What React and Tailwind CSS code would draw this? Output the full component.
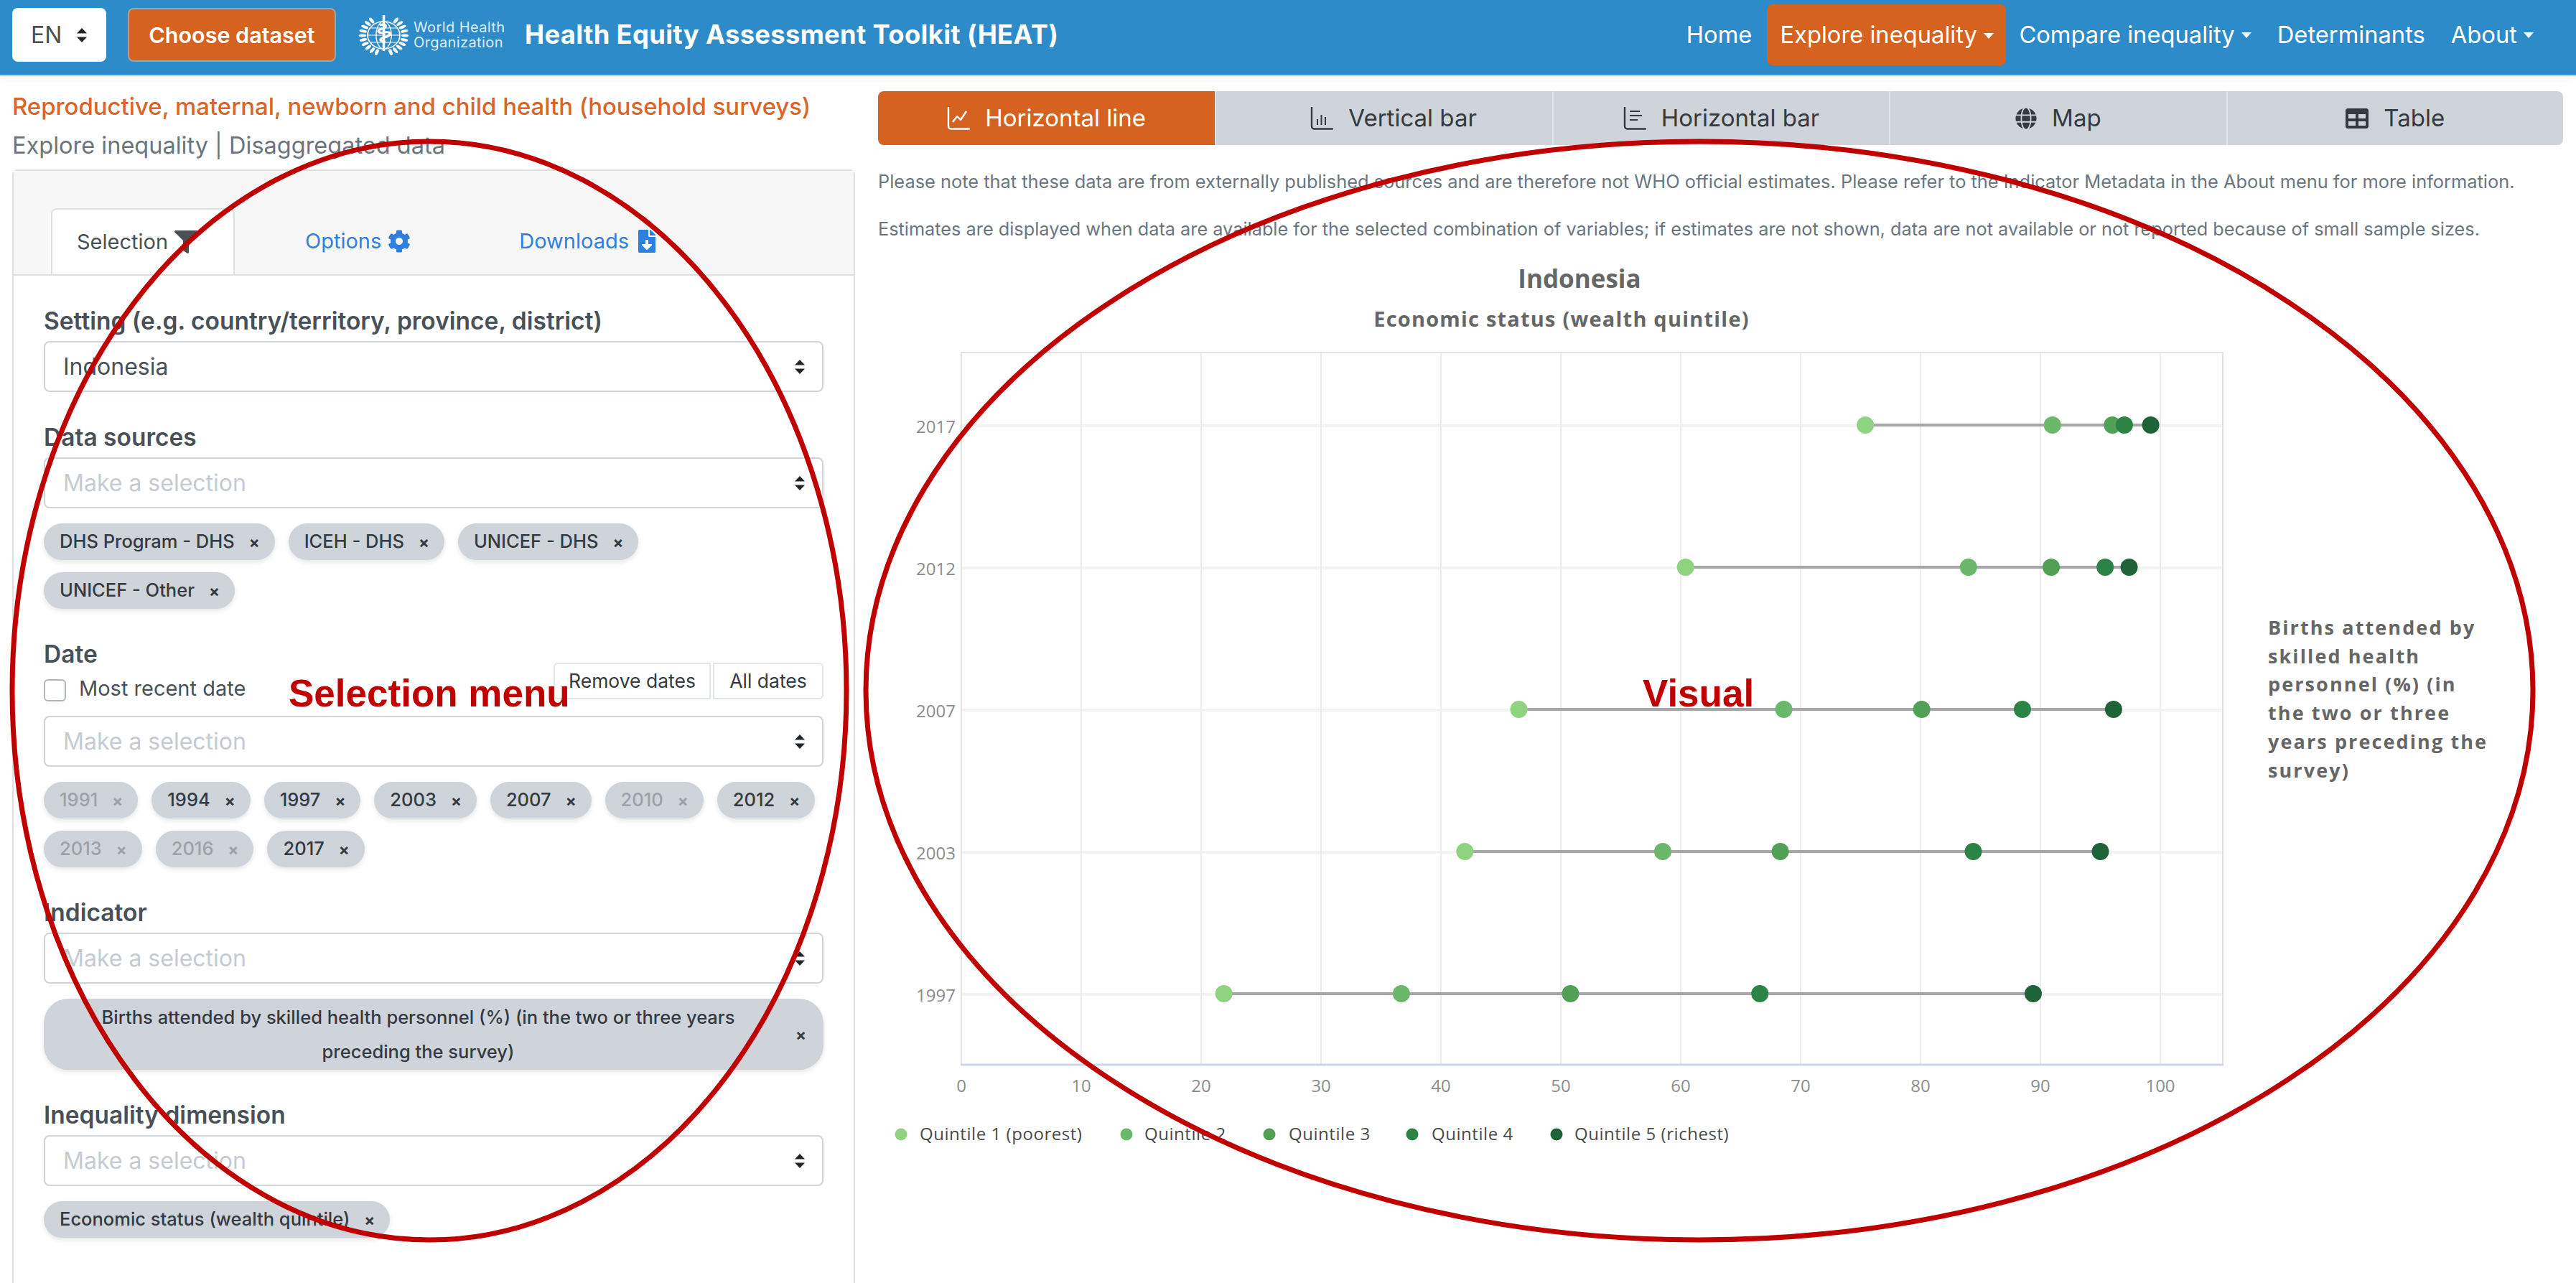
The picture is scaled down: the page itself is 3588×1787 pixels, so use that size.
import { FaCog, FaFileDownload, FaFilter, FaGlobe, FaTable } from "react-icons/fa";

const dots = ["#8fd27f", "#6bb86a", "#52a055", "#2b8346", "#1f6338"];

const rows = [
  { year: "2017", y: 592, values: [75.4, 91, 96, 97, 99.2] },
  { year: "2012", y: 790, values: [60.4, 84, 90.9, 95.4, 97.4] },
  { year: "2007", y: 988, values: [46.5, 68.6, 80.1, 88.5, 96.1] },
  { year: "2003", y: 1186, values: [42, 58.5, 68.3, 84.4, 95] },
  { year: "1997", y: 1384, values: [21.9, 36.7, 50.8, 66.6, 89.4] },
];

const ticks = [0, 10, 20, 30, 40, 50, 60, 70, 80, 90, 100];
const legend = [
  { label: "Quintile 1 (poorest)", dot: 1255, text: 1281 },
  { label: "Quintile 2", dot: 1569, text: 1594 },
  { label: "Quintile 3", dot: 1768, text: 1795 },
  { label: "Quintile 4", dot: 1967, text: 1994 },
  { label: "Quintile 5 (richest)", dot: 2168, text: 2193 },
];

const axisTitle = ["Births attended by", "skilled health", "personnel (%) (in", "the two or three", "years preceding the", "survey)"];

const xOf = (value) => 1339 + value * 16.7;

function Sort() {
  return (
    <svg width="16" height="20" viewBox="0 0 16 20" className="shrink-0 fill-[#212529]">
      <path d="M8 0l7 7.5H1z" />
      <path d="M8 20l-7-7.5h14z" />
    </svg>
  );
}

function Caret() {
  return <span className="ml-[9px] mt-[2px] inline-block border-x-[7px] border-t-[8px] border-x-transparent border-t-white" />;
}

// axis shaped icons of the chart type tabs
function AxisIcon({ children }) {
  return (
    <svg width="32" height="32" viewBox="0 0 32 32" fill="none" stroke="currentColor" strokeWidth="2.4" className="shrink-0">
      <path d="M2 1V27a3.5 3.5 0 0 0 3.5 3.5H31" strokeLinecap="round" />
      {children}
    </svg>
  );
}

function Select({ text, className = "" }) {
  return (
    <div className={`flex h-[71px] items-center justify-between rounded-lg border-2 border-[#ced4da] bg-white pl-[25px] pr-[23px] text-[32px] ${className}`}>
      <span className={text ? "text-[#495057]" : "text-[#c5cbd1]"}>{text || "Make a selection"}</span>
      <Sort />
    </div>
  );
}

function Chip({ label, off }) {
  return (
    <span className={`flex h-[51px] items-center gap-[20px] rounded-full bg-[#ced4da] pl-[22px] pr-[21px] text-[25.5px] font-medium shadow-[0_3px_6px_rgba(0,0,0,0.1)] ${off ? "text-[#9ca2a8]" : "text-[#343a40]"}`}>
      {label}
      <span className="text-[22px] font-bold leading-none">×</span>
    </span>
  );
}

function Chips({ children }) {
  return <div className="mt-[21px] flex flex-wrap gap-x-[19px] gap-y-[17px]">{children}</div>;
}

function Label({ children, className = "" }) {
  return <div className={`mb-[8px] h-[40px] text-[33.5px] font-semibold leading-[40px] text-[#495057] ${className}`}>{children}</div>;
}

function WhoLogo() {
  const leaves = [];
  for (let a = 35; a <= 165; a += 14) {
    leaves.push(a, -a);
  }
  return (
    <svg width="71" height="58" viewBox="-35.5 -29 71 58" className="shrink-0" fill="none" stroke="#fff">
      <g transform="scale(1.18 1)">
        <circle r="19" strokeWidth="1.5" />
        <ellipse rx="9" ry="19" strokeWidth="1.2" />
        <path d="M-19 0h38M-16-10h32M-16 10h32" strokeWidth="1.2" />
        <path d="M0-28V22" strokeWidth="3" />
        <path d="M-5-14c8-3 10 3 3 5s-5 7 3 5 8 5 0 7-5 6 1 6" strokeWidth="3" />
        {leaves.map((a) => (
          <ellipse key={a} cx="0" cy="-25" rx="2" ry="4.5" fill="#fff" stroke="none" transform={`rotate(${a})`} />
        ))}
      </g>
    </svg>
  );
}

function Header() {
  return (
    <header className="flex h-[105px] shrink-0 items-center border-b-2 border-[#3c97d3] bg-[#2e8bc9] pb-[6px] pl-[17px] pr-[40px] shadow-[0_4px_10px_rgba(0,0,0,0.05)]">
      <div className="flex h-[75px] w-[131px] items-center justify-between rounded-lg bg-white pl-[26px] pr-[26px] text-[32px] text-[#495057]">
        EN
        <Sort />
      </div>
      <button className="ml-[30px] h-[75px] w-[290px] rounded-lg border-2 border-[#a9a29a] bg-[#d6621f] text-[30.5px] font-semibold text-white">
        Choose dataset
      </button>
      <div className="ml-[31px]">
        <WhoLogo />
      </div>
      <div className="ml-[6px] w-[125px] whitespace-nowrap text-[20px] leading-[21px] tracking-[0.4px] text-[#dcedf8]">
        <div>World Health</div>
        <div>Organization</div>
      </div>
      <div className="ml-[30px] text-[36.3px] font-bold tracking-[0.35px] text-white">Health Equity Assessment Toolkit (HEAT)</div>
      <nav className="ml-auto flex h-[85px] items-center text-[32.7px] text-white">
        <a className="px-[18px]">Home</a>
        <a className="ml-[3px] flex h-full w-[333px] items-center rounded-lg bg-[#d6621f] pl-[18px]">
          Explore inequality
          <Caret />
        </a>
        <a className="flex items-center px-[18px]">
          Compare inequality
          <Caret />
        </a>
        <a className="px-[18px]">Determinants</a>
        <a className="flex items-center pl-[18px] pr-[19px]">
          About
          <Caret />
        </a>
      </nav>
    </header>
  );
}

function Sidebar() {
  return (
    <aside className="flex w-[1208px] shrink-0 flex-col pl-[17px] pr-[17px]">
      <div className="mt-[23px] h-[40px] text-[32.9px] font-medium leading-[40px] text-[#d9652b]">
        Reproductive, maternal, newborn and child health (household surveys)
      </div>
      <div className="mt-[15px] h-[40px] text-[32.5px] leading-[40px] text-[#6c757d]">Explore inequality | Disaggregated data</div>
      <div className="mt-[13px] flex-1 rounded-t-lg border-2 border-b-0 border-[#dfdfdf]">
        <div className="flex h-[146px] items-end border-b-2 border-[#dfdfdf] bg-[#f7f7f7] pl-[52px] text-[29px]">
          <div className="flex h-[92px] w-[256px] items-center gap-[9px] rounded-t-lg border-2 border-b-0 border-[#dee2e6] bg-white pl-[34px] text-[#495057]">
            Selection
            <FaFilter className="text-[32px] text-[#495057]" />
          </div>
          <div className="ml-[98px] flex h-[92px] items-center gap-[9px] text-[#2f7fe0]">
            Options
            <FaCog className="text-[32px]" />
          </div>
          <div className="ml-[151px] flex h-[92px] items-center gap-[9px] text-[#2f7fe0]">
            Downloads
            <FaFileDownload className="text-[32px]" />
          </div>
        </div>
        <div className="px-[42px] pt-[43px]">
          <Label>Setting (e.g. country/territory, province, district)</Label>
          <Select text="Indonesia" />

          <Label className="mt-[43px]">Data sources</Label>
          <Select />
          <Chips>
            <Chip label="DHS Program - DHS" />
            <Chip label="ICEH - DHS" />
            <Chip label="UNICEF - DHS" />
            <Chip label="UNICEF - Other" />
          </Chips>

          <Label className="mt-[43px] !mb-0">Date</Label>
          <div className="-mt-[8px] flex h-[54px] justify-between">
            <label className="flex items-end gap-[18px] text-[29px] leading-[36px] text-[#495057]">
              <input type="checkbox" readOnly className="h-[31px] w-[31px] appearance-none rounded-md border-2 border-[#adb5bd] bg-white" />
              Most recent date
            </label>
            <div className="flex h-[51px] gap-[3px] text-[26.5px] text-[#343a40]">
              <button className="w-[219px] rounded-l-md border-2 border-[#e3e6e9]">Remove dates</button>
              <button className="w-[154px] rounded-r-md border-2 border-[#e3e6e9]">All dates</button>
            </div>
          </div>
          <Select className="mt-[20px]" />
          <Chips>
            <Chip label="1991" off />
            <Chip label="1994" />
            <Chip label="1997" />
            <Chip label="2003" />
            <Chip label="2007" />
            <Chip label="2010" off />
            <Chip label="2012" />
            <Chip label="2013" off />
            <Chip label="2016" off />
            <Chip label="2017" />
          </Chips>

          <Label className="mt-[43px]">Indicator</Label>
          <Select />
          <div className="mt-[21px] flex h-[99px] items-center rounded-[34px] bg-[#ced4da] pl-[22px] pr-[24px] text-[25.5px] font-medium leading-[48px] text-[#343a40] shadow-[0_3px_6px_rgba(0,0,0,0.1)]">
            <span className="flex-1 text-center">Births attended by skilled health personnel (%) (in the two or three years preceding the survey)</span>
            <span className="ml-[26px] text-[22px] font-bold leading-none">×</span>
          </div>

          <Label className="mt-[43px]">Inequality dimension</Label>
          <Select />
          <Chips>
            <Chip label="Economic status (wealth quintile)" />
          </Chips>
        </div>
      </div>
    </aside>
  );
}

function Tabs() {
  const items = [
    {
      label: "Horizontal line",
      active: true,
      icon: (
        <AxisIcon>
          <path d="M8 21l6-8 5 5 8-12" strokeLinejoin="round" />
        </AxisIcon>
      ),
    },
    {
      label: "Vertical bar",
      pad: "pl-[26px]",
      icon: (
        <AxisIcon>
          <path d="M10 25V17M15.5 25V11M21 25V14" strokeWidth="2" />
        </AxisIcon>
      ),
    },
    {
      label: "Horizontal bar",
      icon: (
        <AxisIcon>
          <path d="M9 6H23M9 12H26M9 18H20" strokeWidth="2.2" />
        </AxisIcon>
      ),
    },
    { label: "Map", icon: <FaGlobe size={30} /> },
    { label: "Table", icon: <FaTable size={32} /> },
  ];
  return (
    <div className="mt-[22px] grid h-[75px] grid-cols-5 overflow-hidden rounded-lg">
      {items.map((item) => (
        <div
          key={item.label}
          className={`flex items-center justify-center gap-[21px] border-l-2 text-[33px] first:border-l-0 ${item.pad || ""} ${
            item.active ? "border-[#d6621f] bg-[#d6621f] text-white" : "border-[#dfe3e7] bg-[#ced4da] text-[#343a40]"
          }`}
        >
          {item.icon}
          {item.label}
        </div>
      ))}
    </div>
  );
}

function Chart() {
  return (
    <svg width="1910" height="1130" viewBox="1223 470 1910 1130" className="shrink-0" fontFamily="'Open Sans', sans-serif">
      {rows.map((row) => (
        <line key={row.year} x1="1339" x2="3096" y1={row.y + 1} y2={row.y + 1} stroke="#f3f3f3" strokeWidth="4" />
      ))}
      {ticks.map((tick) => (
        <line key={tick} x1={xOf(tick)} x2={xOf(tick)} y1="491" y2="1483" stroke="#ececec" strokeWidth="2" />
      ))}
      <path d="M1339 1483V491H3096V1483" fill="none" stroke="#e2e2e2" strokeWidth="2" />
      <line x1="1338" x2="3097" y1="1483" y2="1483" stroke="#ccd6eb" strokeWidth="3" />

      {rows.map((row) => (
        <g key={row.year}>
          <text x="1331" y={row.y + 11} textAnchor="end" fontSize="24" fill="#8c8c8c">
            {row.year}
          </text>
          <line x1={xOf(row.values[0])} x2={xOf(row.values[4])} y1={row.y} y2={row.y} stroke="#a6a6a6" strokeWidth="4" />
          {row.values.map((value, i) => (
            <circle key={i} cx={xOf(value)} cy={row.y} r="12" fill={dots[i]} />
          ))}
        </g>
      ))}

      {ticks.map((tick) => (
        <text key={tick} x={xOf(tick)} y="1521" textAnchor="middle" fontSize="24" fill="#8c8c8c">
          {tick}
        </text>
      ))}

      {legend.map((item, i) => (
        <g key={item.label}>
          <circle cx={item.dot} cy="1580" r="8.5" fill={dots[i]} />
          <text x={item.text} y="1588" fontSize="24" letterSpacing="0.55" fill="#4a4a4a">
            {item.label}
          </text>
        </g>
      ))}
    </svg>
  );
}

function Visual() {
  return (
    <main className="flex flex-1 flex-col pl-[15px] pr-[18px]">
      <Tabs />
      <p className="mt-[31px] h-[40px] text-[25.4px] leading-[40px] text-[#6c757d]">
        Please note that these data are from externally published sources and are therefore not WHO official estimates. Please refer to the Indicator Metadata in the About menu for more information.
      </p>
      <p className="mt-[26px] h-[40px] text-[25.3px] leading-[40px] text-[#6c757d]">
        Estimates are displayed when data are available for the selected combination of variables; if estimates are not shown, data are not available or not reported because of small sample sizes.
      </p>
      <div className="mt-[24px] h-[50px] w-[1954px] text-center font-['Open_Sans',sans-serif] text-[35px] font-bold leading-[50px] text-[#666]">Indonesia</div>
      <div className="mt-[11px] h-[40px] w-[1904px] text-center font-['Open_Sans',sans-serif] text-[29px] font-bold leading-[40px] tracking-[1.2px] text-[#666]">
        Economic status (wealth quintile)
      </div>
      <div className="mt-[6px] flex items-start">
        <Chart />
        <div className="ml-[26px] mt-[384px] whitespace-nowrap font-['Open_Sans',sans-serif] text-[27px] font-bold leading-[39.7px] tracking-[2.1px] text-[#666]">
          {axisTitle.map((line) => (
            <div key={line}>{line}</div>
          ))}
        </div>
      </div>
    </main>
  );
}

function Annotations() {
  return (
    <>
      <svg className="pointer-events-none absolute left-0 top-0" width="3588" height="1787" fill="none" stroke="#c00000" strokeWidth="7">
        <ellipse cx="598" cy="962" rx="581" ry="765" />
        <ellipse cx="2367" cy="962" rx="1161" ry="765" />
      </svg>
      <div className="absolute left-[402px] top-[936px] font-['Liberation_Sans',sans-serif] text-[53px] font-bold leading-[60px] text-[#c00000]">Selection menu</div>
      <div className="absolute left-[2288px] top-[936px] font-['Liberation_Sans',sans-serif] text-[53px] font-bold leading-[60px] text-[#c00000]">Visual</div>
    </>
  );
}

export default function App() {
  return (
    <div className="relative flex h-[1787px] w-[3588px] flex-col overflow-hidden bg-white font-['Inter',sans-serif]">
      <Header />
      <div className="flex flex-1">
        <Sidebar />
        <Visual />
      </div>
      <Annotations />
    </div>
  );
}
